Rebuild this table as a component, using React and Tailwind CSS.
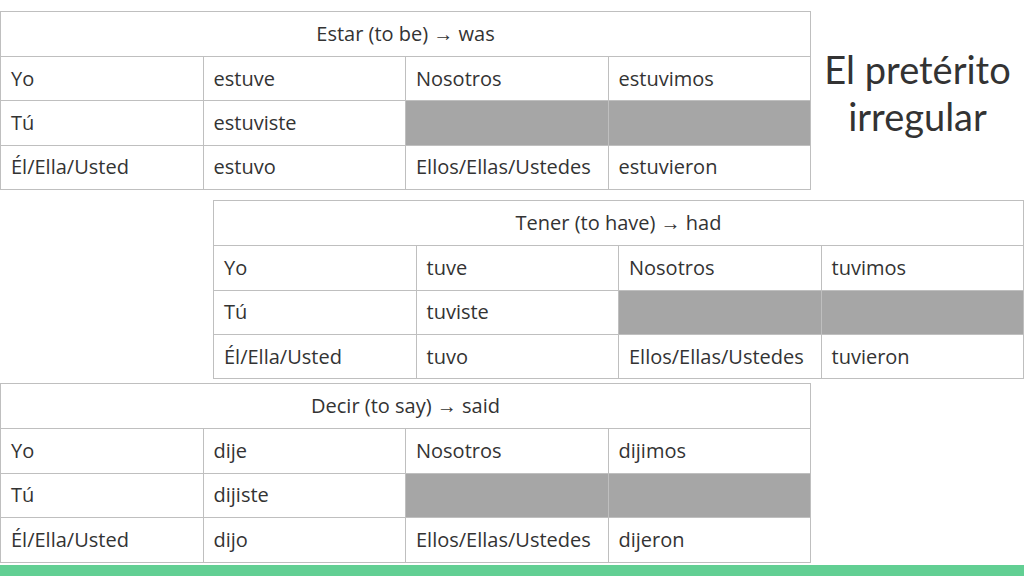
import React from "react";

const Conj = ({ title, rows }) => (
    <table className="border-collapse table-fixed w-[811px] text-[20px] text-[#333333]" style={{ fontFamily: "'Open Sans', sans-serif" }}>
        <tbody>
            <tr>
                <td colSpan={4} className="border border-[#bfbfbf] h-[45px] p-0 text-center align-middle">{title}</td>
            </tr>
            {rows.map((r, i) => (
                <tr key={i}>
                    {r.map((c, j) =>
                        c === null ? (
                            <td key={j} className="border border-[#bfbfbf] h-[44.4px] p-0 bg-[#a6a6a6]" />
                        ) : (
                            <td key={j} className="border border-[#bfbfbf] h-[44.4px] p-0 pl-[10px] align-middle">{c}</td>
                        )
                    )}
                </tr>
            ))}
        </tbody>
    </table>
);

const App = () => {
    return (
        <div className="w-[1024px] h-[576px] bg-white flex flex-col overflow-hidden">
            <div className="flex">
                <div className="mt-[11px]">
                    <Conj
                        title="Estar (to be) → was"
                        rows={[
                            ["Yo", "estuve", "Nosotros", "estuvimos"],
                            ["Tú", "estuviste", null, null],
                            ["Él/Ella/Usted", "estuvo", "Ellos/Ellas/Ustedes", "estuvieron"],
                        ]}
                    />
                </div>
                <div className="flex-1 pt-[46px] text-center text-[38px] leading-[47px] text-[#333333]" style={{ fontFamily: "Lato, sans-serif" }}>
                    El pretérito<br />irregular
                </div>
            </div>
            <div className="ml-[213px] mt-[10px]">
                <Conj
                    title="Tener (to have) → had"
                    rows={[
                        ["Yo", "tuve", "Nosotros", "tuvimos"],
                        ["Tú", "tuviste", null, null],
                        ["Él/Ella/Usted", "tuvo", "Ellos/Ellas/Ustedes", "tuvieron"],
                    ]}
                />
            </div>
            <div className="mt-[4px]">
                <Conj
                    title="Decir (to say) → said"
                    rows={[
                        ["Yo", "dije", "Nosotros", "dijimos"],
                        ["Tú", "dijiste", null, null],
                        ["Él/Ella/Usted", "dijo", "Ellos/Ellas/Ustedes", "dijeron"],
                    ]}
                />
            </div>
            <div className="mt-auto h-[11px] bg-[#62cf93]" />
        </div>
    );
};

export default App;
